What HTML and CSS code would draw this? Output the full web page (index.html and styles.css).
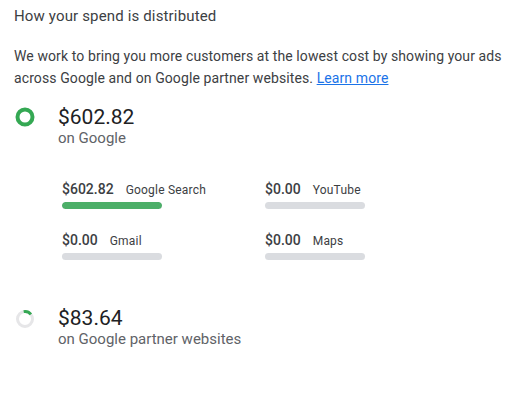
FILE: index.html
```html
<!DOCTYPE html>
<html lang="en">
<head>
    <meta charset="UTF-8">
    <title>Spend distribution</title>
    <link rel="stylesheet" href="styles.css">
</head>
<body>
    <h2 class="title">How your spend is distributed</h2>
    <p class="intro">We work to bring you more customers at the lowest cost by showing your ads across Google and on Google partner websites. <a href="#">Learn more</a></p>

    <div class="network">
        <svg class="donut" width="22" height="22" viewBox="0 0 22 22">
            <circle cx="11" cy="11" r="7.5" fill="none" stroke="#34a853" stroke-width="4"/>
        </svg>
        <div>
            <div class="amount">$602.82</div>
            <div class="where">on Google</div>
        </div>
    </div>

    <div class="breakdown">
        <div class="item">
            <div class="item-head"><span class="item-value">$602.82</span><span class="item-name">Google Search</span></div>
            <div class="bar"><div class="bar-fill" style="width: 100%"></div></div>
        </div>
        <div class="item">
            <div class="item-head"><span class="item-value">$0.00</span><span class="item-name">YouTube</span></div>
            <div class="bar"></div>
        </div>
        <div class="item">
            <div class="item-head"><span class="item-value">$0.00</span><span class="item-name">Gmail</span></div>
            <div class="bar"></div>
        </div>
        <div class="item">
            <div class="item-head"><span class="item-value">$0.00</span><span class="item-name">Maps</span></div>
            <div class="bar"></div>
        </div>
    </div>

    <div class="network partner">
        <svg class="donut" width="22" height="22" viewBox="0 0 22 22">
            <circle cx="11" cy="11" r="7.5" fill="none" stroke="#e6e6e8" stroke-width="3"/>
            <circle cx="11" cy="11" r="7.5" fill="none" stroke="#34a853" stroke-width="3"
                    stroke-dasharray="8 47" transform="rotate(-100 11 11)"/>
        </svg>
        <div>
            <div class="amount">$83.64</div>
            <div class="where">on Google partner websites</div>
        </div>
    </div>
</body>
</html>
```

FILE: styles.css
```css
body { font-family: Roboto, "Liberation Sans", Arial, sans-serif; color: #3c4043; margin: 0; padding: 0 14px; background: #fff; }
.title { font-size: 15px; font-weight: 400; line-height: 20px; margin: 6px 0 0 0; letter-spacing: 0.15px; color: #3c4043; }
.intro { font-size: 14px; line-height: 22px; margin: 19px 0 0 0; letter-spacing: 0.1px; color: #3c4043; }
.intro a { color: #1a73e8; }
.network { display: flex; align-items: flex-start; gap: 22px; margin-top: 16px; }
.donut { margin-top: 1px; }
.amount { font-size: 21px; line-height: 24px; color: #202124; }
.where { font-size: 15px; line-height: 18px; color: #5f6368; }
.breakdown { display: grid; grid-template-columns: 203px 100px; row-gap: 23px; margin: 34px 0 0 48px; }
.item-head { display: flex; align-items: baseline; gap: 12px; height: 16px; white-space: nowrap; }
.item-value { font-size: 14px; font-weight: 500; color: #3c4043; }
.item-name { font-size: 12px; color: #3c4043; letter-spacing: 0.2px; }
.bar { width: 100px; height: 7px; border-radius: 4px; background: #dadce0; margin-top: 5px; overflow: hidden; }
.bar-fill { height: 100%; background: #4caf68; border-radius: 4px; }
.partner { margin-top: 46px; }
.partner .donut { margin-top: 2px; }
```
